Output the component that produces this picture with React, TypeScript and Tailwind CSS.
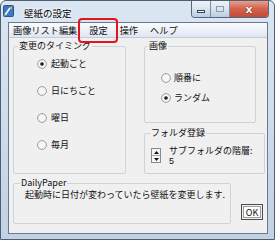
import React from 'react';

const Radio = ({ checked }: { checked?: boolean }) => (
  <svg width="10" height="10" viewBox="0 0 10 10" className="shrink-0">
    <circle cx="5" cy="5" r="4.4" fill="#f6f6f6" stroke="#9b9b9b" strokeWidth="1" />
    {checked && <circle cx="5" cy="5" r="1.8" fill="#1c1c1c" />}
  </svg>
);

const RadioRow = ({ label, checked }: { label: string; checked?: boolean }) => (
  <div className="flex h-[12px] items-center gap-[4px]">
    <Radio checked={checked} />
    <span className="leading-[12px]">{label}</span>
  </div>
);

const Group = ({
  title,
  legendClass,
  className,
  children,
}: {
  title: string;
  legendClass: string;
  className: string;
  children: React.ReactNode;
}) => (
  <fieldset className={`rounded-[2px] border border-[#cdd3d8] p-0 ${className}`}>
    <legend className={`px-[1px] text-[9px] leading-[12px] ${legendClass}`}>{title}</legend>
    {children}
  </fieldset>
);

export default function App() {
  return (
    <div className="flex h-[240px] w-[275px] flex-col overflow-hidden rounded-t-[6px] border border-[#4f5f71] bg-gradient-to-b from-[#dbe6f3] to-[#c1d2e4] font-['Noto_Sans_CJK_JP',sans-serif] text-[9px] text-[#111]">
      {/* title bar */}
      <div className="flex h-[20px] shrink-0">
        <svg width="11" height="12" viewBox="0 0 11 12" className="ml-[2px] mt-[4px]">
          <rect x="0.5" y="0.5" width="10" height="11" rx="1" fill="#3c78c8" stroke="#2a5592" />
          <path d="M2 10 L7 3" stroke="#ffffff" strokeWidth="1.6" />
          <path d="M6.5 2.5 L9 1.5 L8.5 4.5 Z" fill="#f2c63a" />
          <path d="M1.5 10.5 L3 8.5 L4 9.5 Z" fill="#f2c63a" />
        </svg>
        <span className="ml-[10px] mt-[6px] text-[9.5px] leading-[12px] text-black [text-shadow:0_0_4px_#fff,0_0_2px_#fff]">
          壁紙の設定
        </span>
        <div className="ml-auto mr-[5px] flex h-[18px] self-start overflow-hidden rounded-b-[4px] border border-t-0 border-[#55677c] -mt-[1px]">
          <div className="flex w-[19px] items-end justify-center border-r border-[#7d8ea3] bg-gradient-to-b from-[#f1f5fa] via-[#dbe5f0] to-[#bccde0] pb-[4px]">
            <div className="h-[3px] w-[8px] border border-[#34455a] bg-white" />
          </div>
          <div className="flex w-[19px] items-center justify-center border-r border-[#7d8ea3] bg-gradient-to-b from-[#f1f5fa] via-[#dbe5f0] to-[#bccde0] pt-[1px]">
            <div className="h-[6px] w-[8px] border border-[#8d9bb0] bg-transparent" />
          </div>
          <div className="flex w-[38px] items-center justify-center bg-gradient-to-b from-[#eaa797] via-[#d46450] to-[#c24a35] pt-[1px]">
            <span className="font-['DejaVu_Sans',sans-serif] text-[11px] font-bold leading-none text-white [text-shadow:0_0_1px_#5a1a10,0_0_1px_#5a1a10]">
              x
            </span>
          </div>
        </div>
      </div>

      {/* client */}
      <div className="ml-[7px] mr-[6px] mt-[1px] flex h-[212px] flex-col border border-[#6a7a8c] bg-[#f0f0f0]">
        {/* menu bar */}
        <div className="flex h-[15px] shrink-0 items-center gap-[12px] border-b border-[#c5cad6] bg-gradient-to-b from-[#fafbfd] to-[#dfe6f3] pl-[4px] text-[9.2px] leading-[15px]">
          <span>画像リスト編集</span>
          <span className="relative">
            設定
            <span className="absolute -bottom-[5px] -left-[11px] -right-[10px] -top-[5px] rounded-[4px] border-2 border-[#e3141c]" />
          </span>
          <span>操作</span>
          <span>ヘルプ</span>
        </div>

        {/* body */}
        <div className="flex flex-1 flex-col pl-[4px] pt-[2px]">
          <div className="flex">
            <Group title="変更のタイミング" legendClass="ml-[4px]" className="h-[134px] w-[113px]">
              <div className="flex flex-col gap-[15px] pl-[23px] pt-[6px]">
                <RadioRow label="起動ごと" checked />
                <RadioRow label="日にちごと" />
                <RadioRow label="曜日" />
                <RadioRow label="毎月" />
              </div>
            </Group>

            <div className="ml-[18px] flex flex-col">
              <Group title="画像" legendClass="ml-[3px]" className="h-[83px] w-[112px]">
                <div className="flex flex-col gap-[8px] pl-[16px] pt-[20px] [&_div]:gap-[3px]">
                  <RadioRow label="順番に" />
                  <RadioRow label="ランダム" checked />
                </div>
              </Group>
              <Group title="フォルダ登録" legendClass="ml-[5px]" className="mt-[4px] h-[47px] w-[121px]">
                <div className="flex gap-[8px] pl-[6px] pt-[9px]">
                  <div className="flex h-[15px] w-[10px] flex-col border border-[#8a8a8a] bg-[#f4f4f4]">
                    <div className="flex flex-1 items-center justify-center border-b border-[#a8a8a8]">
                      <svg width="5" height="3" viewBox="0 0 5 3">
                        <path d="M0 3 L2.5 0 L5 3 Z" fill="#111" />
                      </svg>
                    </div>
                    <div className="flex flex-1 items-center justify-center">
                      <svg width="5" height="3" viewBox="0 0 5 3">
                        <path d="M0 0 L2.5 3 L5 0 Z" fill="#111" />
                      </svg>
                    </div>
                  </div>
                  <div className="-mt-[3px] flex flex-col leading-[11px]">
                    <span>サブフォルダの階層:</span>
                    <span className="font-['Liberation_Sans',sans-serif]">5</span>
                  </div>
                </div>
              </Group>
            </div>
          </div>

          <div className="mt-[3px] flex items-end">
            <Group title="DailyPaper" legendClass="ml-[6px]" className="h-[47px] w-[218px]">
              <div className="pl-[11px] leading-[12px]">
                起動時に日付が変わっていたら壁紙を変更します.
              </div>
            </Group>
            <button className="mb-[4px] ml-[10px] flex h-[16px] w-[22px] items-center justify-center border border-[#4a4a4a] bg-[#f0f0f0] p-[1px]">
              <span className="flex h-full w-full items-center justify-center border border-[#9c9c9c] bg-white text-[9px] leading-none">
                OK
              </span>
            </button>
          </div>
        </div>
      </div>
    </div>
  );
}
